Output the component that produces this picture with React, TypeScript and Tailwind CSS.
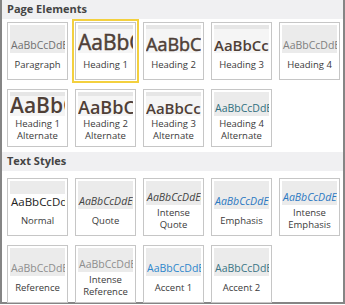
type Tile = {
  label: string[]
  sample: string
  cls: string
  kind: "flat" | "head" | "plain"
  selected?: boolean
}

const pageTiles: Tile[] = [
  { label: ["Paragraph"], sample: "AaBbCcDdEeFf", cls: "text-[10.5px] text-[#6f6f6f]", kind: "flat" },
  { label: ["Heading 1"], sample: "AaBbCcDd", cls: "text-[21px] text-[#4f3f37] [-webkit-text-stroke:0.5px_#4f3f37]", kind: "head", selected: true },
  { label: ["Heading 2"], sample: "AaBbCcDd", cls: "text-[18px] text-[#4f3f37] [-webkit-text-stroke:0.5px_#4f3f37]", kind: "head" },
  { label: ["Heading 3"], sample: "AaBbCcDd", cls: "text-[15px] font-semibold text-[#4f3f37]", kind: "head" },
  { label: ["Heading 4"], sample: "AaBbCcDdEeFf", cls: "text-[10.5px] text-[#808080]", kind: "flat" },
  { label: ["Heading 1", "Alternate"], sample: "AaBbCcDd", cls: "text-[21px] font-semibold text-[#4f3f37]", kind: "head" },
  { label: ["Heading 2", "Alternate"], sample: "AaBbCcDd", cls: "text-[18px] font-semibold text-[#4f3f37]", kind: "head" },
  { label: ["Heading 3", "Alternate"], sample: "AaBbCcDd", cls: "text-[15px] font-semibold text-[#4f3f37]", kind: "head" },
  { label: ["Heading 4", "Alternate"], sample: "AaBbCcDdEeFf", cls: "text-[10.5px] text-[#2f6f7e]", kind: "flat" },
]

const textTiles: Tile[] = [
  { label: ["Normal"], sample: "AaBbCcDdEeFf", cls: "text-[11.5px] text-[#222]", kind: "plain" },
  { label: ["Quote"], sample: "AaBbCcDdEeFf", cls: "text-[10.5px] italic text-[#444]", kind: "flat" },
  { label: ["Intense", "Quote"], sample: "AaBbCcDdEeFf", cls: "text-[10.5px] italic text-[#444]", kind: "flat" },
  { label: ["Emphasis"], sample: "AaBbCcDdEeFf", cls: "text-[10.5px] italic text-[#2b79c2]", kind: "flat" },
  { label: ["Intense", "Emphasis"], sample: "AaBbCcDdEeFf", cls: "text-[10.5px] italic text-[#2b79c2]", kind: "flat" },
  { label: ["Reference"], sample: "AaBbCcDdEeFf", cls: "text-[10.5px] text-[#8e8e8e]", kind: "flat" },
  { label: ["Intense", "Reference"], sample: "AaBbCcDdEeFf", cls: "text-[10.5px] text-[#8e8e8e]", kind: "flat" },
  { label: ["Accent 1"], sample: "AaBbCcDdEeFf", cls: "text-[10.5px] text-[#2b86cc]", kind: "flat" },
  { label: ["Accent 2"], sample: "AaBbCcDdEeFf", cls: "text-[10.5px] text-[#3a7585]", kind: "flat" },
]

function StyleTile({ tile }: { tile: Tile }) {
  const two = tile.label.length > 1
  return (
    <div
      className={`flex h-[58px] w-[61px] flex-col border border-[#c6c6c6] bg-white p-[2px] ${
        tile.selected ? "outline-2 outline-offset-1 outline-[#f3d03e]" : ""
      }`}
    >
      {tile.kind === "flat" && (
        <div className={`flex shrink-0 ${two ? "h-[24px]" : "h-[28px]"} items-end overflow-hidden bg-[#ebebeb]`}>
          <span className={`whitespace-nowrap pl-px leading-[15px] ${tile.cls}`}>{tile.sample}</span>
        </div>
      )}
      {tile.kind === "plain" && (
        <div className="flex h-[28px] shrink-0 flex-col overflow-hidden">
          <div className="h-[13px] shrink-0 bg-[#ebebeb]" />
          <span className={`whitespace-nowrap pl-px leading-[15px] ${tile.cls}`}>{tile.sample}</span>
        </div>
      )}
      {tile.kind === "head" && (
        <div className={`flex shrink-0 ${two ? "h-[24px]" : "h-[28px]"} flex-col overflow-hidden`}>
          <div className="h-[4px] shrink-0 bg-[#e6e6e6]" />
          <div className="flex flex-1 items-end overflow-hidden bg-[#f5f5f5]">
            <span className={`whitespace-nowrap leading-none ${tile.cls}`}>{tile.sample}</span>
          </div>
        </div>
      )}
      <div className="flex flex-1 flex-col items-center justify-center text-[9.5px] leading-[12px] text-[#3a3a3a]">
        {tile.label.map((l) => (
          <span key={l}>{l}</span>
        ))}
      </div>
    </div>
  )
}

function Section({ title, tiles, top }: { title: string; tiles: Tile[]; top: string }) {
  return (
    <div>
      <div className="flex h-[19px] items-center bg-[#f0f0f2] pl-[5px] text-[11px] font-bold text-[#444]">
        {title}
      </div>
      <div className={`grid grid-cols-[repeat(5,61px)] gap-x-[7px] gap-y-[9px] pl-[5px] ${top}`}>
        {tiles.map((t, i) => (
          <StyleTile key={i} tile={t} />
        ))}
      </div>
    </div>
  )
}

export default function App() {
  return (
    <div className="h-[305px] w-[345px] bg-white">
      <div
        className="h-[304px] w-[345px] border-x-2 border-b-2 border-[#858585] bg-white"
        style={{ fontFamily: '"Open Sans", "Noto Sans", sans-serif' }}
      >
        <Section title="Page Elements" tiles={pageTiles} top="pt-[3px] pb-[5px]" />
        <Section title="Text Styles" tiles={textTiles} top="pt-[7px]" />
      </div>
    </div>
  )
}
